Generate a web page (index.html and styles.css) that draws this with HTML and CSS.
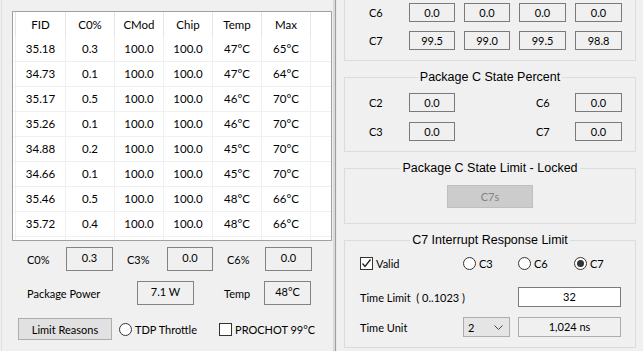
FILE: index.html
```html
<!DOCTYPE html>
<html lang="en">
<head>
    <meta charset="UTF-8">
    <meta name="viewport" content="width=device-width, initial-scale=1.0">
    <title>C State Monitor</title>
    <link rel="stylesheet" href="styles.css">
</head>
<body>
    <div class="app">
        <div class="left">
            <div class="list">
                <div class="row head">
                    <div></div><div>FID</div><div>C0%</div><div>CMod</div><div>Chip</div><div>Temp</div><div>Max</div><div></div>
                </div>
                <div class="row"><div></div><div>35.18</div><div>0.3</div><div>100.0</div><div>100.0</div><div>47°C</div><div>65°C</div><div></div></div>
                <div class="row"><div></div><div>34.73</div><div>0.1</div><div>100.0</div><div>100.0</div><div>47°C</div><div>64°C</div><div></div></div>
                <div class="row"><div></div><div>35.17</div><div>0.5</div><div>100.0</div><div>100.0</div><div>46°C</div><div>70°C</div><div></div></div>
                <div class="row"><div></div><div>35.26</div><div>0.1</div><div>100.0</div><div>100.0</div><div>46°C</div><div>70°C</div><div></div></div>
                <div class="row"><div></div><div>34.88</div><div>0.2</div><div>100.0</div><div>100.0</div><div>45°C</div><div>70°C</div><div></div></div>
                <div class="row"><div></div><div>34.66</div><div>0.1</div><div>100.0</div><div>100.0</div><div>45°C</div><div>70°C</div><div></div></div>
                <div class="row"><div></div><div>35.46</div><div>0.5</div><div>100.0</div><div>100.0</div><div>48°C</div><div>66°C</div><div></div></div>
                <div class="row"><div></div><div>35.72</div><div>0.4</div><div>100.0</div><div>100.0</div><div>48°C</div><div>66°C</div><div></div></div>
                <div class="row"><div></div><div></div><div></div><div></div><div></div><div></div><div></div><div></div></div>
            </div>

            <div class="stat-row first">
                <span class="lbl w39">C0%</span>
                <span class="box w47">0.3</span>
                <span class="lbl w54">C3%</span>
                <span class="box w46">0.0</span>
                <span class="lbl w52">C6%</span>
                <span class="box w47">0.0</span>
            </div>
            <div class="stat-row second">
                <span class="lbl w110">Package Power</span>
                <span class="box w57">7.1 W</span>
                <span class="lbl w70">Temp</span>
                <span class="box w47">48°C</span>
            </div>
            <div class="stat-row third">
                <button class="btn">Limit Reasons</button>
                <span class="radio"></span>
                <span class="opt-label">TDP Throttle</span>
                <span class="check"></span>
                <span class="opt-label">PROCHOT 99°C</span>
            </div>
        </div>

        <div class="splitter"></div>

        <div class="right">
            <div class="group top">
                <div class="core-grid">
                    <span>C6</span>
                    <span class="val">0.0</span><span class="val">0.0</span><span class="val">0.0</span><span class="val">0.0</span>
                    <span>C7</span>
                    <span class="val">99.5</span><span class="val">99.0</span><span class="val">99.5</span><span class="val">98.8</span>
                </div>
            </div>

            <fieldset class="group">
                <legend>Package C State Percent</legend>
                <div class="pkg-grid">
                    <span>C2</span><span class="val">0.0</span><span class="far">C6</span><span class="val">0.0</span>
                    <span>C3</span><span class="val">0.0</span><span class="far">C7</span><span class="val">0.0</span>
                </div>
            </fieldset>

            <fieldset class="group">
                <legend>Package C State Limit - Locked</legend>
                <button class="btn locked" disabled>C7s</button>
            </fieldset>

            <fieldset class="group">
                <legend>C7 Interrupt Response Limit</legend>
                <div class="irq-grid">
                    <label class="opt"><span class="check on"><svg width="11" height="11" viewBox="0 0 11 11"><path d="M1.5 5.5 L4 8.5 L9.5 1.5" fill="none" stroke="#222" stroke-width="1.3"/></svg></span>Valid</label>
                    <label class="opt"><span class="radio"></span>C3</label>
                    <label class="opt"><span class="radio"></span>C6</label>
                    <label class="opt"><span class="radio on"></span>C7</label>

                    <span class="span2">Time Limit&nbsp; ( 0..1023 )</span>
                    <span class="edit span2">32</span>

                    <span>Time Unit</span>
                    <span class="select">2<svg width="9" height="5" viewBox="0 0 9 5"><path d="M0.5 0.5 L4.5 4.5 L8.5 0.5" fill="none" stroke="#444" stroke-width="1"/></svg></span>
                    <span class="readout span2">1,024 ns</span>
                </div>
            </fieldset>
        </div>
    </div>
</body>
</html>
```

FILE: styles.css
```css
body {
    margin: 0;
    background-color: #f0f0f0;
    font-family: Lato, "Liberation Sans", sans-serif;
    font-size: 11px;
    color: #000;
}

.app {
    display: flex;
    width: 643px;
    height: 351px;
    overflow: hidden;
}

/* left side: list view and package readings */
.left {
    width: 320px;
    margin-left: 1px;
    border-left: 1px solid #e0e0e0;
    padding-left: 10px;
}

.list {
    margin-top: 11px;
    height: 228px;
    border: 1px solid #a0a0a0;
    background: white;
    overflow: hidden;
    font-size: 11.5px;
}

.row {
    display: grid;
    grid-template-columns: 3px 50px repeat(5, 49px) 1fr;
    height: 25px;
}

.row div {
    box-sizing: border-box;
    border-right: 1px solid #f0f0f0;
    border-bottom: 1px solid #f0f0f0;
    text-align: center;
    line-height: 24px;
}

.row div:last-child {
    border-right: none;
}

.row.head div {
    border-right-color: #e5e5e5;
    border-bottom: none;
    line-height: 25px;
}

.row.head div:last-child {
    border-right: none;
}

.stat-row {
    display: flex;
    align-items: center;
}

.stat-row.first {
    margin-top: 6px;
    padding-left: 15px;
    height: 24px;
}

.stat-row.second {
    margin-top: 10px;
    padding-left: 15px;
    height: 24px;
}

.stat-row.third {
    margin-top: 13px;
    padding-left: 6px;
    height: 22px;
}

.lbl {
    box-sizing: border-box;
}

.w39 { width: 39px; }
.w54 { width: 54px; padding-left: 14px; }
.w52 { width: 52px; padding-left: 14px; }
.w110 { width: 110px; }
.w70 { width: 70px; padding-left: 30px; }
.w46 { width: 46px; }
.w47 { width: 47px; }
.w57 { width: 57px; }

.box {
    box-sizing: border-box;
    height: 24px;
    border: 1px solid #838383;
    text-align: center;
    padding-top: 3px;
    line-height: 14px;
}

.btn {
    font: inherit;
    color: #000;
    width: 94px;
    height: 22px;
    background: #e1e1e1;
    border: 1px solid #adadad;
    padding: 0;
}

.radio,
.check {
    box-sizing: border-box;
    display: inline-block;
    width: 13px;
    height: 13px;
    border: 1px solid #333;
    background: white;
    flex-shrink: 0;
}

.radio {
    border-radius: 50%;
    position: relative;
}

.radio.on::after {
    content: "";
    position: absolute;
    left: 2px;
    top: 2px;
    width: 7px;
    height: 7px;
    border-radius: 50%;
    background: #333;
}

.check svg {
    display: block;
}

.stat-row .radio {
    margin-left: 7px;
}

.stat-row .check {
    margin-left: 22px;
}

.opt-label {
    margin-left: 3px;
}

/* splitter between panes */
.splitter {
    width: 6px;
    background: linear-gradient(to right, #f0f0f0 0 1px, #dadada 1px 3px, #a0a0a0 3px 4px, #e8e8e8 4px 5px, #f0f0f0 5px);
}

/* right side group boxes */
.right {
    width: 292px;
    padding-left: 6px;
}

.group {
    margin: 0;
    border: 1px solid #dcdcdc;
    padding: 0;
    min-width: 0;
}

.group.top {
    border-top: none;
    padding: 3px 0 10px 24px;
}

fieldset.group {
    margin-top: 8px;
}

.group legend {
    margin: 0 auto;
    padding: 0 2px;
    font-family: "Liberation Sans", sans-serif;
    font-size: 12.5px;
    line-height: 16px;
}

.val {
    box-sizing: border-box;
    border: 1px solid #7a7a7a;
    height: 19px;
    line-height: 17px;
    text-align: center;
}

.core-grid {
    display: grid;
    grid-template-columns: 31px 46px 46px 47px 47px;
    grid-auto-rows: 19px;
    column-gap: 9px;
    row-gap: 9px;
    align-items: center;
}

.pkg-grid {
    display: grid;
    grid-template-columns: 40px 46px 120px 47px;
    grid-auto-rows: 19px;
    row-gap: 10px;
    align-items: center;
    padding: 8px 0 10px 24px;
}

.pkg-grid .far {
    padding-left: 81px;
}

.btn.locked {
    display: block;
    margin: 9px auto 15px;
    width: 86px;
    height: 23px;
    background: #cccccc;
    border-color: #bfbfbf;
    color: #838383;
}

.irq-grid {
    display: grid;
    grid-template-columns: 103px 55px 56px 46px;
    grid-template-rows: 24px 20px 20px;
    row-gap: 10px;
    align-items: center;
    padding: 5px 0 10px 15px;
}

.irq-grid .opt {
    display: flex;
    align-items: center;
    gap: 3px;
    align-self: start;
    height: 20px;
}

.span2 {
    grid-column: span 2;
}

.edit,
.readout {
    box-sizing: border-box;
    width: 103px;
    height: 20px;
    line-height: 18px;
    text-align: center;
    border: 1px solid #7a7a7a;
    background: white;
}

.readout {
    background: #f0f0f0;
    border-color: #adadad;
}

.select {
    box-sizing: border-box;
    width: 47px;
    height: 20px;
    display: flex;
    align-items: center;
    justify-content: space-between;
    padding: 0 6px 0 4px;
    background: #e5e5e5;
    border: 1px solid #adadad;
}
```
